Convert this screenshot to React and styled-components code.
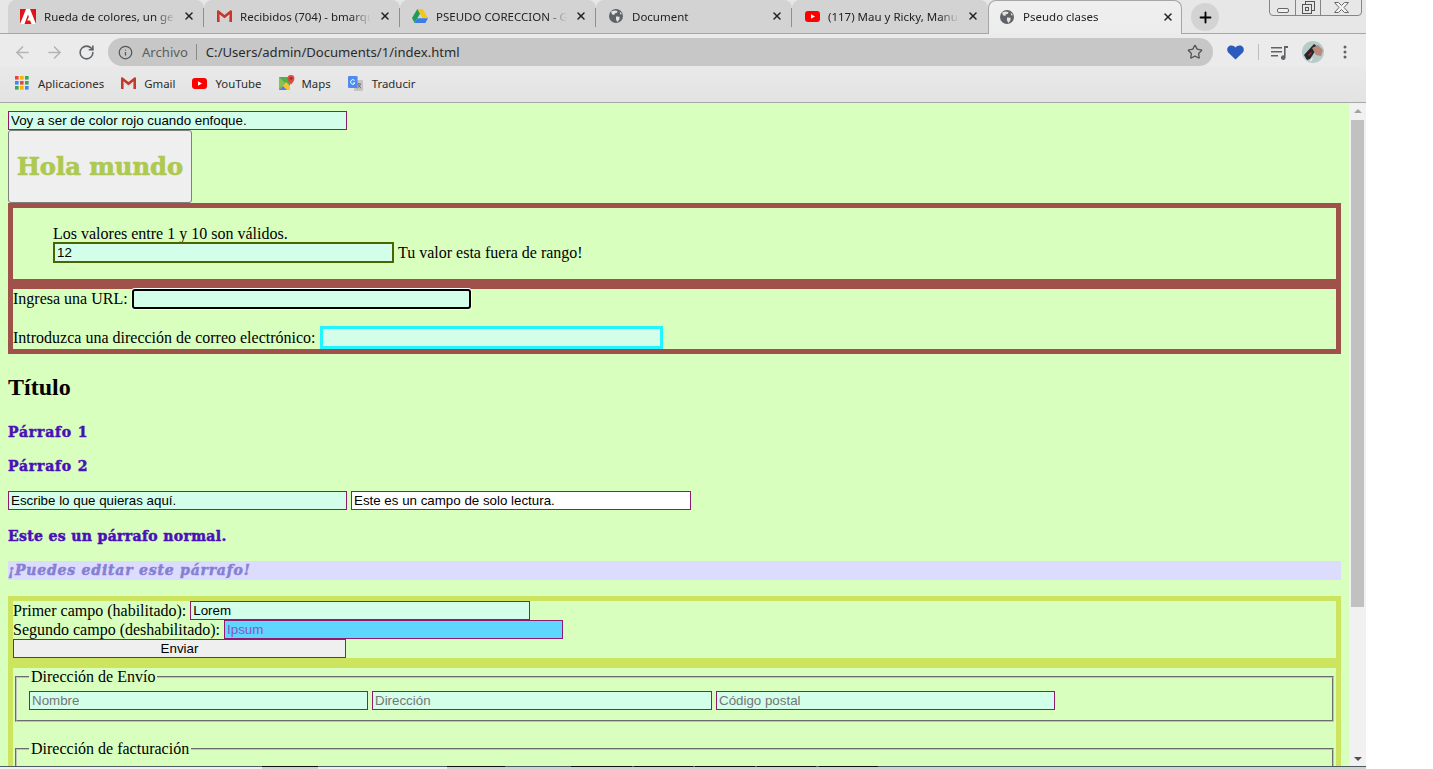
import React from 'react';
import styled, { createGlobalStyle } from 'styled-components';
import { ArrowLeft, ArrowRight, RotateCw, Info, Star, X, Plus } from 'lucide-react';

const GlobalStyle = createGlobalStyle`
  html, body {
    margin: 0;
    background: #fff;
    overflow: hidden;
  }
  * { box-sizing: border-box; }
`;

/* ---------- icons ---------- */

const AdobeIcon = () => (
  <svg width="16" height="15" viewBox="0 0 16 15">
    <rect width="16" height="15" fill="#e0131a" />
    <path d="M6 0h4l6 15h-4.500L10 11.500H7.200L8.800 8 8 5.500 4.500 15H0z" fill="#fff" />
  </svg>
);

const GmailIcon = () => (
  <svg width="15" height="12" viewBox="0 0 15 12">
    <path d="M0 1.5C0 .5 1 0 1.8.6L7.5 5 13.2.6C14 0 15 .5 15 1.5V12h-2.6V4.6L7.5 8.4 2.6 4.6V12H0z" fill="#c5392c" />
    <path d="M2.6 4.6L7.5 8.4 12.4 4.6V6.5L7.5 10 2.6 6.5z" fill="#d9d9d9" opacity=".6" />
  </svg>
);

const DriveIcon = () => (
  <svg width="16" height="14" viewBox="0 0 16 14">
    <path d="M5.3 0h5.4l5.3 9h-5.4z" fill="#f5c518" />
    <path d="M5.3 0L0 9l2.6 5 5.4-9.2z" fill="#1e9e54" />
    <path d="M5.3 9.2H16L13.4 14H2.6z" fill="#3d7de4" />
  </svg>
);

const YoutubeIcon = () => (
  <svg width="15" height="11" viewBox="0 0 15 11">
    <rect width="15" height="11" rx="3" fill="#f00" />
    <path d="M6 3.2L10 5.5 6 7.8z" fill="#fff" />
  </svg>
);

const GlobeIcon = () => (
  <svg width="16" height="16" viewBox="0 0 16 16">
    <circle cx="8" cy="8" r="7" fill="#5f6368" />
    <path d="M3 3.4L6.4 2.4 9.6 3 8.6 5 6.8 5.2 6.4 7 4 6.2zM8 8.4L11.6 8.8 11.4 11.4 9.4 14 8 11.6zM11.6 3.6L14 6 12.4 6.6z" fill="#e4e4e4" />
  </svg>
);

const AppsIcon = () => {
  const colors = ['#e8453c', '#f4b400', '#34a853', '#4285f4', '#e8453c', '#34a853', '#34a853', '#f4b400', '#4285f4'];
  return (
    <svg width="14" height="14" viewBox="0 0 14 14">
      {colors.map((c, i) => (
        <rect key={i} x={(i % 3) * 5} y={Math.floor(i / 3) * 5} width="3.6" height="3.6" fill={c} />
      ))}
    </svg>
  );
};

const MapsIcon = () => (
  <svg width="16" height="16" viewBox="0 0 16 16">
    <path d="M0 2h11v13H0z" fill="#4caf50" />
    <path d="M0 15L7 7l4 4v4z" fill="#f7c52b" />
    <path d="M0 15L4 11l4 4z" fill="#4285f4" />
    <path d="M0 2l6 6-6 6z" fill="#8bc34a" />
    <path d="M12 0a3.4 3.4 0 0 1 3.4 3.4C15.4 6 12 9.5 12 9.5S8.6 6 8.6 3.4A3.4 3.4 0 0 1 12 0z" fill="#dd4b3e" />
    <circle cx="12" cy="3.4" r="1.2" fill="#8c2b22" />
  </svg>
);

const TranslateIcon = () => (
  <svg width="15" height="15" viewBox="0 0 15 15">
    <rect x="6" y="4" width="9" height="11" rx="1" fill="#c4c4c4" />
    <path d="M9 8h4M11 7v1M9.6 12.4L12.6 8.4M10 8.6l3 3.6" stroke="#666" strokeWidth=".9" fill="none" />
    <rect width="9.6" height="12" rx="1" fill="#4d8bf0" />
    <path d="M6.6 4.4A2.3 2.3 0 1 0 7 7H5" stroke="#fff" strokeWidth="1" fill="none" />
  </svg>
);

const HeartIcon = () => (
  <svg width="17" height="15" viewBox="0 0 17 15">
    <path d="M8.5 14.6L1.2 7.4C-.6 5.4 0 1.6 3.2.6 5.4 0 7.4 1 8.5 2.6 9.6 1 11.6 0 13.8.6 17 1.6 17.6 5.4 15.8 7.4z" fill="#2a5cbe" />
  </svg>
);

const MediaIcon = () => (
  <svg width="17" height="15" viewBox="0 0 17 15">
    <path d="M0 2h11v1.4H0zM0 6h11v1.4H0zM0 10h7v1.4H0z" fill="#5f6368" />
    <path d="M13 1h4v2h-2.4v9.6A2.3 2.3 0 1 1 13 10.4z" fill="#5f6368" />
  </svg>
);

const Avatar = () => (
  <svg width="22" height="22" viewBox="0 0 22 22">
    <circle cx="11" cy="11" r="11" fill="#b7cbc9" />
    <path d="M2 14L12 3l4 3-8 12-3 1z" fill="#23282a" />
    <path d="M10 7l6-3 5 5-2 6-5-1z" fill="#b9897a" />
    <path d="M6 14l3-3 1 1-3 3z" fill="#c21f2b" />
    <path d="M8 20l2-3 .8.4-2 3z" fill="#fff" />
  </svg>
);

const MenuDots = () => (
  <svg width="4" height="14" viewBox="0 0 4 14">
    <circle cx="2" cy="2" r="1.5" fill="#5f6368" />
    <circle cx="2" cy="7" r="1.5" fill="#5f6368" />
    <circle cx="2" cy="12" r="1.5" fill="#5f6368" />
  </svg>
);

const RestoreIcon = () => (
  <svg width="13" height="13" viewBox="0 0 13 13" fill="none" stroke="#555">
    <rect x="3.5" y=".5" width="9" height="9" />
    <rect x=".5" y="3.5" width="9" height="9" fill="#e6e6e6" />
    <rect x="3.5" y="6.5" width="3" height="3" />
  </svg>
);

const CloseWinIcon = () => (
  <svg width="15" height="11" viewBox="0 0 15 11" fill="#f2f2f2" stroke="#6a6a6a">
    <path d="M.5.5h4L7.500 3.500 10.500.5h4L10 5.500l4.500 5h-4l-3-3-3 3h-4L5 5.500z" />
  </svg>
);

/* ---------- browser chrome ---------- */

const Shot = styled.div`
  width: 1433px;
  height: 769px;
  overflow: hidden;
`;

const Screen = styled.div`
  width: 1366px;
  height: 769px;
  display: flex;
  flex-direction: column;
`;

const TabStrip = styled.div`
  height: 34px;
  flex: none;
  display: flex;
  position: relative;
  padding-left: 8px;
  background: #e7e7e7;
  border-bottom: 1px solid #a6a6a6;
`;

const Tab = styled.div`
  width: ${p => (p.$active ? '194px' : '196px')};
  height: ${p => (p.$active ? '34px' : '33px')};
  flex: none;
  display: flex;
  align-items: center;
  gap: 8px;
  padding: ${p => (p.$active ? '0 7px 2px 10px' : '0 9px 1px 12px')};
  position: relative;
  border-radius: 8px 8px 0 0;
  background: ${p => (p.$active ? 'linear-gradient(#efefef, #ececec)' : '#d3d3d3')};
  border: ${p => (p.$active ? '1px solid #a6a6a6' : 'none')};
  border-bottom: none;
  z-index: ${p => (p.$active ? 1 : 0)};

  &::after {
    content: '';
    display: ${p => (p.$sep ? 'block' : 'none')};
    position: absolute;
    right: 0;
    top: 8px;
    width: 1px;
    height: 19px;
    background: #8f8f8f;
  }
`;

const TabIcon = styled.span`
  width: 16px;
  flex: none;
  display: flex;
  justify-content: center;
`;

const TabTitle = styled.span`
  flex: 1;
  min-width: 0;
  overflow: hidden;
  white-space: nowrap;
  font: 11.5px "Noto Sans", sans-serif;
  color: #222;
  -webkit-mask-image: linear-gradient(90deg, #000 85%, transparent);
  mask-image: linear-gradient(90deg, #000 85%, transparent);
`;

const NewTab = styled.div`
  width: 28px;
  height: 28px;
  margin: 3px 0 0 9px;
  flex: none;
  display: flex;
  align-items: center;
  justify-content: center;
  border-radius: 50%;
  background: #d3d3d3;
  color: #000;
`;

const WindowControls = styled.div`
  position: absolute;
  top: -1px;
  left: 1269px;
  width: 93px;
  height: 17px;
  display: grid;
  grid-template-columns: 25px 25px 1fr;
  border: 1px solid #858585;
  border-radius: 0 0 4px 4px;
`;

const WindowButton = styled.div`
  display: flex;
  align-items: center;
  justify-content: center;
  & + & { border-left: 1px solid #858585; }
`;

const MinimizeBar = styled.span`
  width: 12px;
  height: 5px;
  margin-top: 5px;
  border: 1px solid #666;
  border-radius: 2px;
  background: #f0f0f0;
`;

const Toolbar = styled.div`
  height: 32px;
  flex: none;
  display: flex;
  align-items: flex-end;
  background: #ebebeb;
`;

const NavButton = styled.span`
  width: 32px;
  height: 28px;
  flex: none;
  display: flex;
  align-items: center;
  justify-content: center;
  color: ${p => (p.$off ? '#b4b4b4' : '#5f6368')};
`;

const NavGroup = styled.div`
  display: flex;
  padding-left: 6px;
  margin-right: 6px;
`;

const Omnibox = styled.div`
  width: 1105px;
  height: 28px;
  flex: none;
  display: flex;
  align-items: center;
  padding: 0 10px 0 10px;
  border-radius: 14px;
  background: #c7c7c7;
  color: #555;
  font: 13.1px "Noto Sans", sans-serif;
`;

const Scheme = styled.span`
  margin-left: 9px;
  padding-right: 8px;
  margin-right: 9px;
  border-right: 1px solid #8a8a8a;
  line-height: 16px;
  color: #5c5c5c;
`;

const Url = styled.span`
  flex: 1;
  color: #2b2b2b;
`;

const ToolSlot = styled.span`
  height: 28px;
  flex: none;
  width: ${p => p.$w}px;
  display: flex;
  align-items: center;
  justify-content: center;
`;

const ToolDivider = styled.span`
  width: 1px;
  height: 16px;
  flex: none;
  margin-bottom: 6px;
  background: #bdbdbd;
`;

const Bookmarks = styled.div`
  height: 37px;
  flex: none;
  display: flex;
  align-items: center;
  padding: 0 0 2px 15px;
  background: linear-gradient(#e9e9e9, #e3e3e3);
  border-bottom: 1px solid #a8a8a8;
`;

const Bookmark = styled.span`
  display: flex;
  align-items: center;
  gap: ${p => p.$gap}px;
  margin-right: ${p => p.$after}px;
  font: 11.4px "Noto Sans", sans-serif;
  color: #2b2b2b;
`;

/* ---------- page ---------- */

const Viewport = styled.div`
  height: 663px;
  flex: none;
  display: flex;
  overflow: hidden;
`;

const Page = styled.main`
  width: 1349px;
  flex: none;
  padding: 8px;
  background: #d9ffbf;
  font: 16px/18px "Liberation Serif", serif;
  color: #000;
`;

const Scrollbar = styled.div`
  width: 17px;
  flex: none;
  display: flex;
  flex-direction: column;
  align-items: center;
  background: #f1f1f1;
`;

const ScrollArrow = styled.span`
  width: 0;
  height: 0;
  flex: none;
  border-left: 4px solid transparent;
  border-right: 4px solid transparent;
  ${p => (p.$down
    ? 'border-top: 4px solid #505050; margin-top: auto; margin-bottom: 5px;'
    : 'border-bottom: 4px solid #a3a3a3; margin-top: 6px;')}
`;

const ScrollThumb = styled.span`
  width: 13px;
  height: 487px;
  flex: none;
  margin-top: 7px;
  background: #c1c1c1;
`;

const Field = styled.input`
  display: block;
  flex: none;
  width: ${p => p.$w || 339}px;
  height: 19px;
  margin: 0;
  padding: 1px 2px;
  border: 1px solid #8f1a6e;
  border-radius: 0;
  outline: none;
  background: #d3ffea;
  font: 13.33px "Liberation Sans", sans-serif;
  color: #000;

  &::placeholder { color: #757575; opacity: 1; }
  &:disabled { background: #5fd6ff; color: #8a55c4; }
`;

const ReadonlyField = styled(Field)`
  background: #fff;
`;

const RangeField = styled(Field)`
  width: 341px;
  height: 21px;
  border: 2px solid #4a6400;
`;

const UrlField = styled(Field)`
  height: 20px;
  border: 2px solid #000;
  border-radius: 3px;
  box-shadow: 0 0 0 1px #fff;
`;

const EmailField = styled(Field)`
  width: 343px;
  height: 23px;
  border: 3px solid #22f5ff;
`;

const HolaButton = styled.button`
  display: block;
  width: 184px;
  height: 73px;
  padding: 0;
  border: 1px solid #808080;
  border-radius: 3px;
  background: #efefef;
  color: #aec94f;
  font: 900 24.2px "DejaVu Serif", serif;
  -webkit-text-stroke: .7px #aec94f;
  white-space: nowrap;
`;

const BrownBox = styled.section`
  border: 5px solid #a0524a;
`;

const RangeBox = styled(BrownBox)`
  height: 81px;
  padding: 16px 0 0 40px;
`;

const RangeHint = styled.div`
  padding-top: 1px;
  line-height: 17px;
`;

const InputBox = styled(BrownBox)`
  height: 70px;
  display: flex;
  flex-direction: column;
  gap: 17px;
`;

const Line = styled.div`
  display: flex;
  align-items: center;
  gap: 4px;
`;

const FieldRow = styled(Line)`
  margin-bottom: 16px;
`;

const Title = styled.h2`
  margin: 20px 0 21px;
  font: bold 24px/27px "Liberation Serif", serif;
`;

const Para = styled.p`
  margin: 0 0 16px;
  padding-top: .5px;
  font: 900 14px/18px "DejaVu Serif", serif;
  letter-spacing: ${p => p.$spacing ?? 0.4}px;
  color: #4a10b8;
  -webkit-text-stroke: .5px #4a10b8;
`;

const Editable = styled(Para)`
  height: 19.5px;
  line-height: 19px;
  font-style: italic;
  background: #dcdcff;
  color: #8680d2;
  -webkit-text-stroke: .5px #8680d2;
`;

const GreenBox = styled.section`
  border: 5px solid #cde45e;
`;

const SendButton = styled.button`
  display: block;
  width: 333px;
  height: 19px;
  padding: 0;
  border: 1px solid #8f1a6e;
  background: #efefef;
  font: 13.33px "Liberation Sans", sans-serif;
  color: #000;
`;

const AddressSet = styled.fieldset`
  margin: ${p => (p.$next ? '18px' : '0')} 2px 0;
  padding: 4.6px 12px 10px;
  min-width: 0;
  min-height: ${p => (p.$next ? '70px' : '0')};
  display: flex;
  gap: 4px;
  border: 2px groove #c0c0c0;
`;

const AddressLegend = styled.legend`
  padding: 0 2px;
  font: 16px/18px "Liberation Serif", serif;
`;

const BigBox = styled(GreenBox)`
  height: 200px;
  border-bottom: none;
`;

const Taskbar = styled.div`
  height: 3px;
  flex: none;
  display: flex;
  background: #cfd3d6;
  border-top: 1px solid #4e5a62;
`;

const TaskSlot = styled.span`
  flex: none;
  height: 3px;
  margin-top: -1px;
  width: ${p => p.$w}px;
  border-top: 1px solid ${p => (p.$on ? '#111' : '#4e5a62')};
  background: ${p => (p.$light ? '#f0f0f0' : '#cfd3d6')};
`;

/* ---------- data ---------- */

const tabs = [
  { icon: <AdobeIcon />, title: 'Rueda de colores, un generador de paletas', sep: true },
  { icon: <GmailIcon />, title: 'Recibidos (704) - bmarquez@gmail.com', sep: true },
  { icon: <DriveIcon />, title: 'PSEUDO CORECCION - Google Drive', sep: true },
  { icon: <GlobeIcon />, title: 'Document', sep: true },
  { icon: <YoutubeIcon />, title: '(117) Mau y Ricky, Manuel Turizo', sep: false },
];

const bookmarks = [
  { icon: <AppsIcon />, label: 'Aplicaciones', gap: 9, after: 17 },
  { icon: <GmailIcon />, label: 'Gmail', gap: 8, after: 17 },
  { icon: <YoutubeIcon />, label: 'YouTube', gap: 8, after: 17 },
  { icon: <MapsIcon />, label: 'Maps', gap: 7, after: 17 },
  { icon: <TranslateIcon />, label: 'Traducir', gap: 9, after: 0 },
];

const taskSlots = [
  { w: 262, light: true }, { w: 56, on: true }, { w: 129, light: true }, { w: 58, on: true },
  { w: 66 }, { w: 61, on: true }, { w: 2 }, { w: 59, on: true }, { w: 2 }, { w: 60, on: true },
  { w: 2 }, { w: 59, on: true }, { w: 3 }, { w: 59, on: true },
];

const App = () => {
  return (
    <Shot>
      <GlobalStyle />
      <Screen>
        <TabStrip>
          {tabs.map(t => (
            <Tab key={t.title} $sep={t.sep}>
              <TabIcon>{t.icon}</TabIcon>
              <TabTitle>{t.title}</TabTitle>
              <X size={12} strokeWidth={3} color="#222" />
            </Tab>
          ))}
          <Tab $active>
            <TabIcon><GlobeIcon /></TabIcon>
            <TabTitle>Pseudo clases</TabTitle>
            <X size={12} strokeWidth={3} color="#222" />
          </Tab>
          <NewTab><Plus size={17} strokeWidth={2.6} /></NewTab>
          <WindowControls>
            <WindowButton><MinimizeBar /></WindowButton>
            <WindowButton><RestoreIcon /></WindowButton>
            <WindowButton><CloseWinIcon /></WindowButton>
          </WindowControls>
        </TabStrip>

        <Toolbar>
          <NavGroup>
            <NavButton $off><ArrowLeft size={19} strokeWidth={2} /></NavButton>
            <NavButton $off><ArrowRight size={19} strokeWidth={2} /></NavButton>
            <NavButton><RotateCw size={17} strokeWidth={2.2} /></NavButton>
          </NavGroup>
          <Omnibox>
            <Info size={15} strokeWidth={2} />
            <Scheme>Archivo</Scheme>
            <Url>C:/Users/admin/Documents/1/index.html</Url>
            <Star size={16} strokeWidth={2} />
          </Omnibox>
          <ToolSlot $w={45}><HeartIcon /></ToolSlot>
          <ToolDivider />
          <ToolSlot $w={41}><MediaIcon /></ToolSlot>
          <ToolSlot $w={25}><Avatar /></ToolSlot>
          <ToolSlot $w={40}><MenuDots /></ToolSlot>
        </Toolbar>

        <Bookmarks>
          {bookmarks.map(b => (
            <Bookmark key={b.label} $gap={b.gap} $after={b.after}>{b.icon}{b.label}</Bookmark>
          ))}
        </Bookmarks>

        <Viewport>
          <Page>
            <Field defaultValue="Voy a ser de color rojo cuando enfoque." />
            <HolaButton>Hola mundo</HolaButton>

            <RangeBox>
              <RangeHint>Los valores entre 1 y 10 son válidos.</RangeHint>
              <Line>
                <RangeField defaultValue="12" />
                <span>Tu valor esta fuera de rango!</span>
              </Line>
            </RangeBox>

            <InputBox>
              <Line>
                <span>Ingresa una URL:</span>
                <UrlField />
              </Line>
              <Line>
                <span>Introduzca una dirección de correo electrónico:</span>
                <EmailField />
              </Line>
            </InputBox>

            <Title>Título</Title>
            <Para $spacing={0.8}>Párrafo 1</Para>
            <Para $spacing={0.8}>Párrafo 2</Para>
            <FieldRow>
              <Field defaultValue="Escribe lo que quieras aquí." />
              <ReadonlyField readOnly $w={340} defaultValue="Este es un campo de solo lectura." />
            </FieldRow>
            <Para $spacing={0.35}>Este es un párrafo normal.</Para>
            <Editable $spacing={0.8}>¡Puedes editar este párrafo!</Editable>

            <GreenBox>
              <Line>
                <span>Primer campo (habilitado):</span>
                <Field $w={340} defaultValue="Lorem" />
              </Line>
              <Line>
                <span>Segundo campo (deshabilitado):</span>
                <Field disabled defaultValue="Ipsum" />
              </Line>
              <SendButton>Enviar</SendButton>
            </GreenBox>

            <BigBox>
              <AddressSet>
                <AddressLegend>Dirección de Envío</AddressLegend>
                <Field placeholder="Nombre" />
                <Field $w={340} placeholder="Dirección" />
                <Field placeholder="Código postal" />
              </AddressSet>
              <AddressSet $next>
                <AddressLegend>Dirección de facturación</AddressLegend>
              </AddressSet>
            </BigBox>
          </Page>
          <Scrollbar>
            <ScrollArrow />
            <ScrollThumb />
            <ScrollArrow $down />
          </Scrollbar>
        </Viewport>

        <Taskbar>
          {taskSlots.map((s, i) => (
            <TaskSlot key={i} $w={s.w} $on={s.on} $light={s.light} />
          ))}
        </Taskbar>
      </Screen>
    </Shot>
  );
};

export default App;
